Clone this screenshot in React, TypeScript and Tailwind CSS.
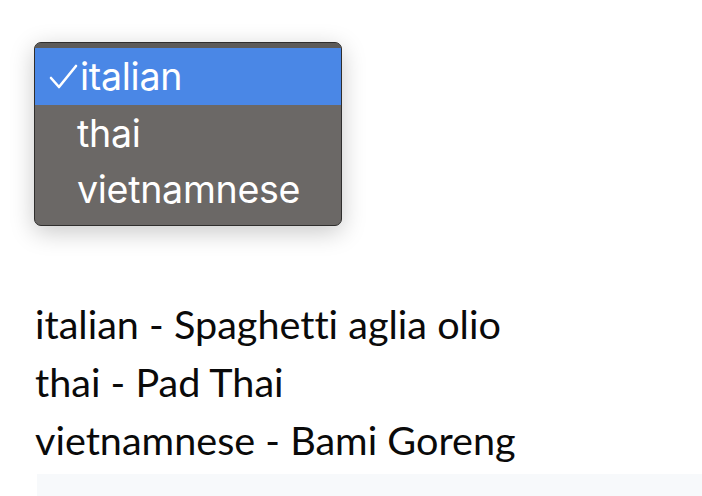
import React from "react";

const cuisines = [
  { key: "italian", dish: "Spaghetti aglia olio" },
  { key: "thai", dish: "Pad Thai" },
  { key: "vietnamnese", dish: "Bami Goreng" },
];

function Check() {
  return (
    <svg width="30" height="26" viewBox="0 0 30 26" className="mr-[1px] shrink-0">
      <path d="M2 14 L10 23 L27 2" fill="none" stroke="white" strokeWidth="2.6" strokeLinecap="round" strokeLinejoin="round" />
    </svg>
  );
}

function Menu() {
  return (
    <div className="w-[308px] h-[184px] rounded-[7px] border border-[#2f2e2d] bg-[#6b6866] pt-[5px] shadow-[0_6px_24px_rgba(0,0,0,0.22)] overflow-hidden">
      <div className="-mt-[5px] h-[5px] bg-[#5d5b59]" />
      {cuisines.map((c, i) => (
        <div
          key={c.key}
          className={
            i === 0
              ? "flex h-[57px] items-center bg-[#4a87e6] pl-[14px] text-white"
              : "flex h-[57px] items-center pl-[42px] text-white"
          }
          style={i === 2 ? { height: 56 } : undefined}
        >
          {i === 0 && <Check />}
          <span className="font-['Inter',sans-serif] text-[37.6px] leading-none tracking-[-0.3px]">{c.key}</span>
        </div>
      ))}
    </div>
  );
}

export default function App() {
  return (
    <div className="h-[496px] w-[702px] overflow-hidden bg-white">
      <div className="pl-[34px] pt-[42px]">
        <Menu />
      </div>
      <div className="mt-[69px] pl-[35px] font-['Lato',sans-serif] text-[39.6px] leading-[58px] text-[#0a0a0a] [font-variant-ligatures:none]">
        {cuisines.map((c) => (
          <div key={c.key}>
            {c.key} - {c.dish}
          </div>
        ))}
      </div>
      <div className="ml-[37px] mt-[5px] h-[30px] bg-[#f7f9fb]" />
    </div>
  );
}
